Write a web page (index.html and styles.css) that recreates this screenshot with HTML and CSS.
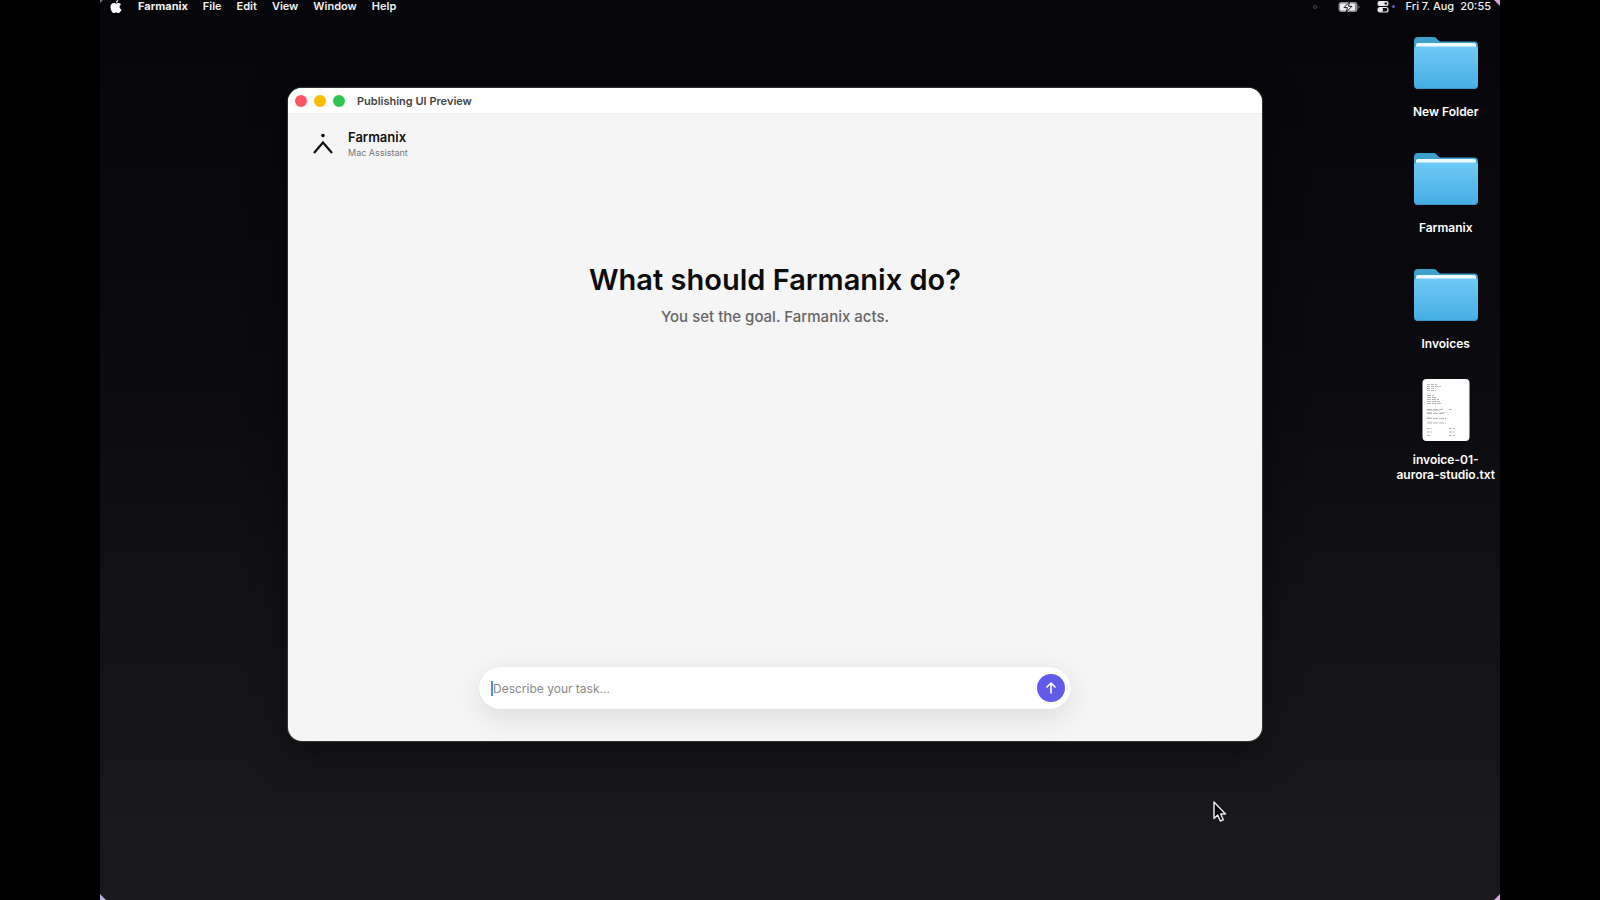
FILE: index.html
```html
<!DOCTYPE html>
<html lang="en">
<head>
  <meta charset="UTF-8">
  <meta name="viewport" content="width=device-width, initial-scale=1.0">
  <title>Farmanix</title>
  <link rel="stylesheet" href="styles.css">
</head>
<body>
  <div class="desktop">
    <header class="menubar">
      <nav class="menus">
        <button class="menu apple" aria-label="Apple menu">
          <svg width="12" height="14" viewBox="0 0 12 14" fill="#fff">
            <path d="M8.3 0c.1 1.200-1.100 2.700-2.400 2.700C5.700 1.500 7 .1 8.300 0zM6 3.700c.6 0 1.200-.6 2.400-.6 1 0 2 .5 2.600 1.400-2.100 1.300-1.800 4 .5 4.900-.5 1.500-1.700 3.600-3 3.600-.9 0-1.300-.5-2.300-.5S4.700 13 3.900 13C2.500 13 .5 10.100.5 7.200c0-2.700 1.700-4.100 3.300-4.100 1 0 1.700.6 2.200.6z"/>
          </svg>
        </button>
        <button class="menu app-name">Farmanix</button>
        <button class="menu">File</button>
        <button class="menu">Edit</button>
        <button class="menu">View</button>
        <button class="menu">Window</button>
        <button class="menu">Help</button>
      </nav>
      <div class="status">
        <svg class="mic" width="6" height="6" viewBox="0 0 6 6"><circle cx="3" cy="3" r="1.500" fill="none" stroke="#44444a"/></svg>
        <svg class="battery" width="22" height="12" viewBox="0 0 22 12">
          <rect x=".5" y="1" width="19" height="10" rx="3" fill="#8d8d90"/>
          <rect x="2" y="2.500" width="15" height="7" rx="1.500" fill="#efeff0"/>
          <path d="M20.500 4.500v3c1.300-.4 1.300-2.600 0-3z" fill="#8d8d90"/>
          <path d="M11.500 1L6 6.600h3.500L8.300 11 14 5.300h-3.500z" fill="#fff" stroke="#17171b"/>
        </svg>
        <svg class="control" width="12" height="13" viewBox="0 0 12 13">
          <rect x=".5" y="1" width="11" height="5" rx="2" fill="#e8e8ea"/>
          <rect x="1" y="7.500" width="10" height="4.500" rx="2" fill="none" stroke="#e8e8ea" stroke-width="1.200"/>
          <circle cx="8.800" cy="3.500" r="1.300" fill="#17171b"/>
          <rect x="1" y="7.500" width="5" height="4.500" rx="2" fill="#e8e8ea"/>
        </svg>
        <span class="dot"></span>
        <span class="date">Fri 7. Aug</span>
        <span class="time">20:55</span>
      </div>
    </header>

    <ul class="icons">
      <li class="icon">
        <svg class="thumb" width="66" height="62" viewBox="0 0 66 62">
          <defs>
            <linearGradient id="front" x1="0" y1="0" x2="0" y2="1">
              <stop offset="0" stop-color="#6fcaf5"/>
              <stop offset="1" stop-color="#45ade3"/>
            </linearGradient>
            <symbol id="folder" viewBox="0 0 66 62">
              <path d="M1 10a4 4 0 0 1 4-4h15c2 0 3 .5 4 2l1 1c1 1 2 1.500 3 1.500h33a4 4 0 0 1 4 4V30H1z" fill="#3d9fcd"/>
              <rect x="3" y="12" width="60" height="10" rx="2" fill="#effaff"/>
              <path d="M1 18a2.500 2.500 0 0 1 2.500-2.500h59A2.500 2.500 0 0 1 65 18v36a4 4 0 0 1-4 4H5a4 4 0 0 1-4-4z" fill="url(#front)"/>
              <path d="M2 55.500c1 1.500 2 2 3 2h56c1 0 2-.5 3-2" fill="none" stroke="#3b97cb"/>
            </symbol>
          </defs>
          <use href="#folder"/>
        </svg>
        <span class="label">New Folder</span>
      </li>
      <li class="icon">
        <svg class="thumb" width="66" height="62" viewBox="0 0 66 62"><use href="#folder"/></svg>
        <span class="label">Farmanix</span>
      </li>
      <li class="icon">
        <svg class="thumb" width="66" height="62" viewBox="0 0 66 62"><use href="#folder"/></svg>
        <span class="label">Invoices</span>
      </li>
      <li class="icon">
        <svg class="thumb" width="66" height="62" viewBox="0 0 66 62">
          <rect x="9.500" y="0" width="47" height="62" rx="4" fill="#fff"/>
          <g fill="none" stroke="#a4a4a4" stroke-width=".8">
            <path d="M14 5.500h10M14 7.500h14M14 9.500h8M14 11.500h9" stroke-dasharray="3 1"/>
            <path d="M14 16.500h7M14 18.500h10M14 20.500h12M14 22.500h13M14 24.500h14" stroke-dasharray="4 1"/>
            <path d="M14 30.500h16M36 30.500h3M14 34.500h18M14 39.500h19M14 44h19" stroke-dasharray="5 1"/>
            <path d="M14 31.500h12M14 33.500h5M27 33.500h5M14 38.500h4M14 43h5" stroke="#ccc"/>
            <path d="M14 49.500h5M36 49.500h6M14 53h5M36 53h5M14 56.500h4M36 56.500h6" stroke-dasharray="3 1"/>
          </g>
        </svg>
        <span class="label">invoice-01-<br>aurora-studio.txt</span>
      </li>
    </ul>

    <main class="window">
      <div class="titlebar">
        <button class="light close" aria-label="Close"></button>
        <button class="light minimize" aria-label="Minimize"></button>
        <button class="light zoom" aria-label="Zoom"></button>
        <span class="title">Publishing UI Preview</span>
      </div>
      <div class="content">
        <div class="brand">
          <svg width="20" height="22" viewBox="0 0 20 22">
            <circle cx="10" cy="2.500" r="1.800" fill="#111"/>
            <path d="M1 20l9-10.500L19 20" fill="none" stroke="#111" stroke-width="2.200"/>
          </svg>
          <div class="brand-text">
            <div class="name">Farmanix</div>
            <div class="role">Mac Assistant</div>
          </div>
        </div>
        <div class="hero">
          <h1>What should Farmanix do?</h1>
          <p>You set the goal. Farmanix acts.</p>
        </div>
        <form class="composer">
          <input type="text" placeholder="Describe your task..." aria-label="Describe your task">
          <button class="send" type="button" aria-label="Send">
            <svg width="12" height="12" viewBox="0 0 12 12" fill="none" stroke="#fff" stroke-width="1.600" stroke-linecap="round" stroke-linejoin="round">
              <path d="M6 11V1.200M2 5l4-4 4 4"/>
            </svg>
          </button>
        </form>
      </div>
    </main>

    <svg class="cursor" width="16" height="24" viewBox="0 0 16 24">
      <path d="M2 2v16.500l3.700-3.500 2.600 6 3-1.300-2.600-5.700H13.500z" fill="#050505" stroke="#e6e6e6" stroke-width="1.500" stroke-linejoin="round"/>
    </svg>
    <span class="corner top-left"></span>
    <span class="corner top-right"></span>
    <span class="corner bottom-left"></span>
    <span class="corner bottom-right"></span>
  </div>
</body>
</html>
```
FILE: styles.css
```css
* {
  margin: 0;
  padding: 0;
  box-sizing: border-box;
}

body {
  font-family: Inter, 'Liberation Sans', sans-serif;
  background: #000;
}

button {
  font: inherit;
  color: inherit;
  background: none;
  border: none;
}

svg {
  display: block;
}

.desktop {
  position: relative;
  width: 87.5%;
  min-height: 100vh;
  margin: 0 auto;
  background: linear-gradient(#06060a, #0c0c10 45%, #1a1a1e 95%);
  overflow: hidden;
}

/* menu bar */
.menubar {
  display: flex;
  justify-content: space-between;
  height: 13px;
  padding: 0 9px 0 10px;
  font-size: 11px;
  font-weight: 500;
  line-height: 13px;
  color: #f2f2f2;
}

.menus,
.status {
  display: flex;
  align-items: center;
}

.menus {
  gap: 15px;
  font-weight: 600;
}

.app-name {
  margin-left: 1px;
  font-weight: 700;
}

.battery {
  margin-left: 20px;
}

.control {
  margin-left: 17px;
}

.dot {
  width: 3px;
  height: 3px;
  margin-left: 3px;
  border-radius: 50%;
  background: #6a55c8;
}

.date {
  margin-left: 11px;
}

.time {
  margin-left: 6px;
}

/* desktop icons */
.icons {
  display: grid;
  grid-auto-rows: 116px;
  justify-content: end;
  padding: 18px 5px 0 0;
  list-style: none;
}

.icon {
  display: flex;
  flex-direction: column;
  align-items: center;
  gap: 11px;
}

.label {
  font-size: 12px;
  font-weight: 600;
  line-height: 15px;
  text-align: center;
  color: #fff;
}

/* app window */
.window {
  position: absolute;
  top: 88px;
  right: 238px;
  bottom: 159px;
  left: 188px;
  display: flex;
  flex-direction: column;
  border-radius: 14px;
  background: #f5f5f5;
  box-shadow: 0 0 1px 1px rgba(120, 120, 120, 0.4), 0 12px 36px rgba(0, 0, 0, 0.5);
  overflow: hidden;
}

.titlebar {
  display: flex;
  align-items: center;
  gap: 7px;
  height: 26px;
  padding-left: 7px;
  border-bottom: 1px solid #eee;
  background: #fff;
}

.light {
  width: 12px;
  height: 12px;
  border-radius: 50%;
}

.close {
  background: #fb5562;
}

.minimize {
  background: #fbbd05;
}

.zoom {
  background: #2dc451;
}

.title {
  margin-left: 5px;
  font-size: 11px;
  font-weight: 600;
  color: #444;
}

.content {
  flex: 1;
  display: flex;
  flex-direction: column;
  align-items: center;
}

.brand {
  align-self: flex-start;
  display: flex;
  align-items: center;
  gap: 15px;
  padding: 15px 0 0 25px;
}

.name {
  font-size: 13px;
  font-weight: 600;
  line-height: 17px;
  color: #111;
}

.role {
  font-size: 9px;
  line-height: 13px;
  color: #777;
}

.hero {
  flex: 1;
  padding-top: 102px;
  text-align: center;
}

.hero h1 {
  font-size: 29px;
  font-weight: 600;
  line-height: 38px;
  color: #0c0c0c;
}

.hero p {
  margin-top: 7px;
  font-size: 15px;
  font-weight: 500;
  line-height: 22px;
  color: #666;
}

.composer {
  display: flex;
  align-items: center;
  width: 592px;
  max-width: 90%;
  height: 42px;
  margin-bottom: 32px;
  padding: 0 6px 0 12px;
  border-radius: 21px;
  background: #fff;
  box-shadow: 0 0 1px rgba(0, 0, 0, 0.15), 0 8px 30px rgba(0, 0, 0, 0.1);
}

/* text caret drawn as the left edge of the field */
.composer input {
  flex: 1;
  height: 15px;
  border: none;
  border-left: 2px solid #4f8fd6;
  outline: none;
  background: none;
  font: 12px/15px Inter, 'Liberation Sans', sans-serif;
  color: #111;
}

.composer input::placeholder {
  color: #8a8a8a;
}

.send {
  display: flex;
  align-items: center;
  justify-content: center;
  width: 28px;
  height: 28px;
  border-radius: 50%;
  background: #625bea;
}

.cursor {
  position: absolute;
  right: 272px;
  bottom: 76px;
}

/* wallpaper showing behind the rounded screen corners */
.corner {
  position: absolute;
  width: 6px;
  height: 6px;
  background: #d9a3d8;
}

.top-left {
  top: 0;
  left: 0;
  width: 3px;
  height: 3px;
  background: #77777c;
  clip-path: polygon(0 0, 100% 0, 0 100%);
}

.top-right {
  top: 0;
  right: 0;
  clip-path: polygon(0 0, 100% 0, 100% 100%);
}

.bottom-left {
  bottom: 0;
  left: 0;
  background: #b5b0d8;
  clip-path: polygon(0 0, 100% 100%, 0 100%);
}

.bottom-right {
  right: 0;
  bottom: 0;
  clip-path: polygon(100% 0, 100% 100%, 0 100%);
}
```
